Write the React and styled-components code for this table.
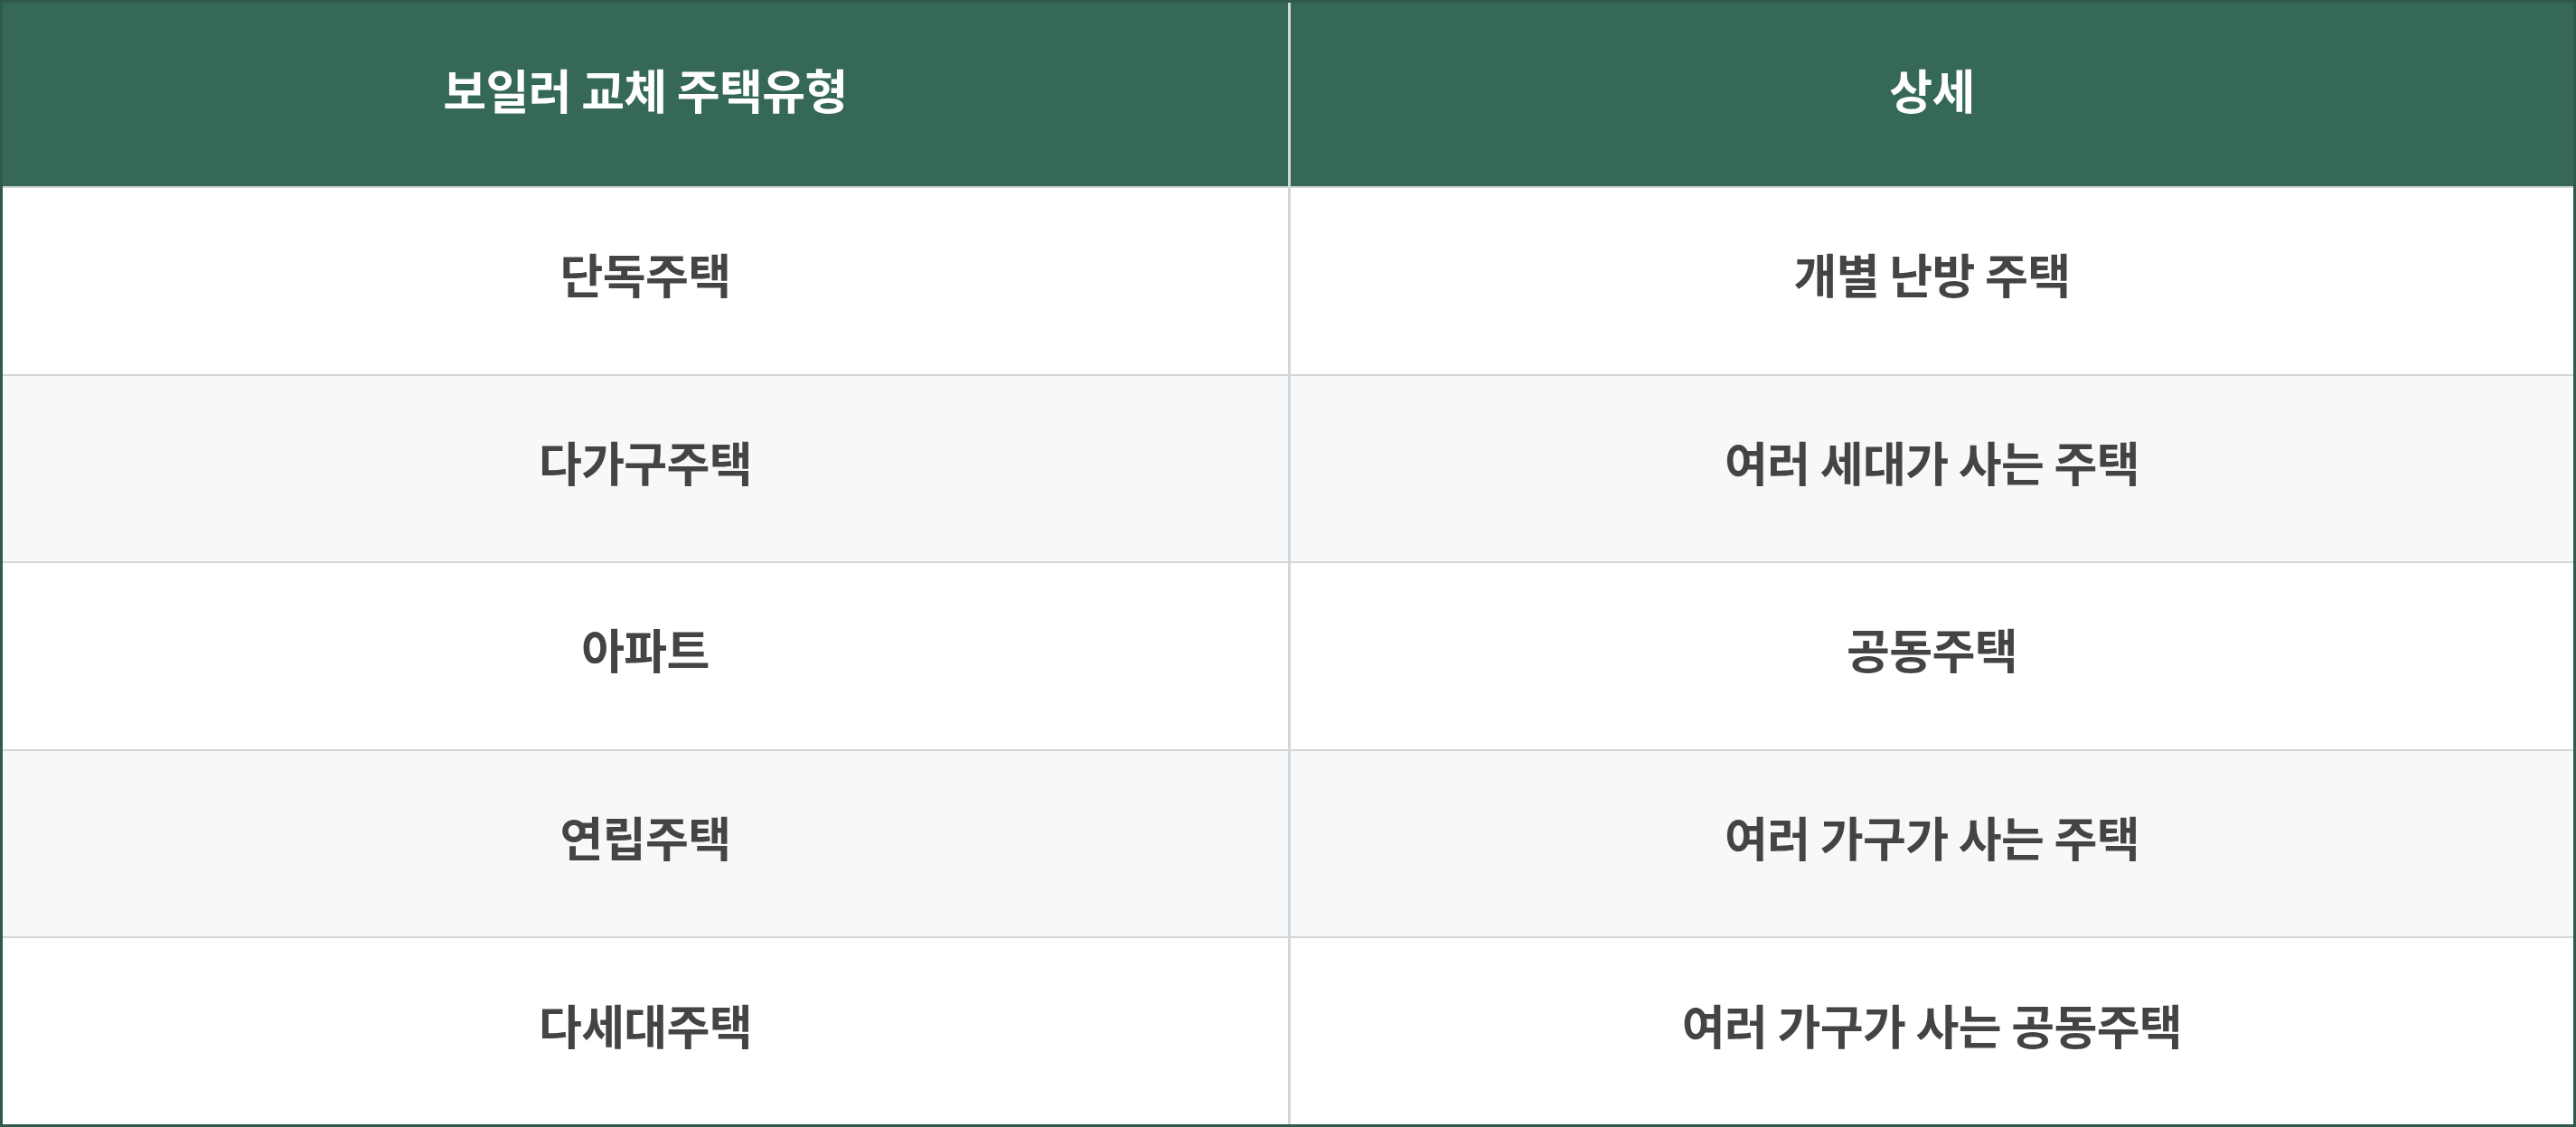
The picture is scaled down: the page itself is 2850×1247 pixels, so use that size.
import React from "react"
import styled, { createGlobalStyle } from "styled-components"

const GlobalStyle = createGlobalStyle`
    html, body {
        margin: 0;
        padding: 0;
        background: #ffffff;
    }
    body {
        font-family: "Noto Sans CJK KR", "Noto Sans", sans-serif;
    }
`

const Table = styled.div`
    box-sizing: border-box;
    width: 2850px;
    height: 1247px;
    border: 3px solid #2f5a49;
    display: grid;
    grid-template-rows: 203px repeat(5, 1fr);
`

const Row = styled.div`
    display: grid;
    grid-template-columns: 1fr 1fr;
    background: ${({ $head, $stripe }) => ($head ? "#356855" : $stripe ? "#f7f8fa" : "#ffffff")};
    border-top: ${({ $head }) => ($head ? "none" : "2px solid #d3d6d8")};
`

const Cell = styled.div`
    display: flex;
    align-items: center;
    justify-content: center;
    padding-bottom: ${({ $head }) => ($head ? "12px" : "16px")};
    font-size: 52px;
    font-weight: 600;
    letter-spacing: -0.6px;
    color: ${({ $head }) => ($head ? "#ffffff" : "#444444")};
    & + & {
        border-left: 3px solid ${({ $head }) => ($head ? "#c9d3ce" : "#d3d6d8")};
    }
`

const rows = [
    ["단독주택", "개별 난방 주택"],
    ["다가구주택", "여러 세대가 사는 주택"],
    ["아파트", "공동주택"],
    ["연립주택", "여러 가구가 사는 주택"],
    ["다세대주택", "여러 가구가 사는 공동주택"],
]

const App = () => {
    return (
        <>
            <GlobalStyle />
            <Table>
                <Row $head>
                    <Cell $head>보일러 교체 주택유형</Cell>
                    <Cell $head>상세</Cell>
                </Row>
                {rows.map(([type, detail], i) => (
                    <Row key={type} $stripe={i % 2 === 1}>
                        <Cell>{type}</Cell>
                        <Cell>{detail}</Cell>
                    </Row>
                ))}
            </Table>
        </>
    )
}

export default App
